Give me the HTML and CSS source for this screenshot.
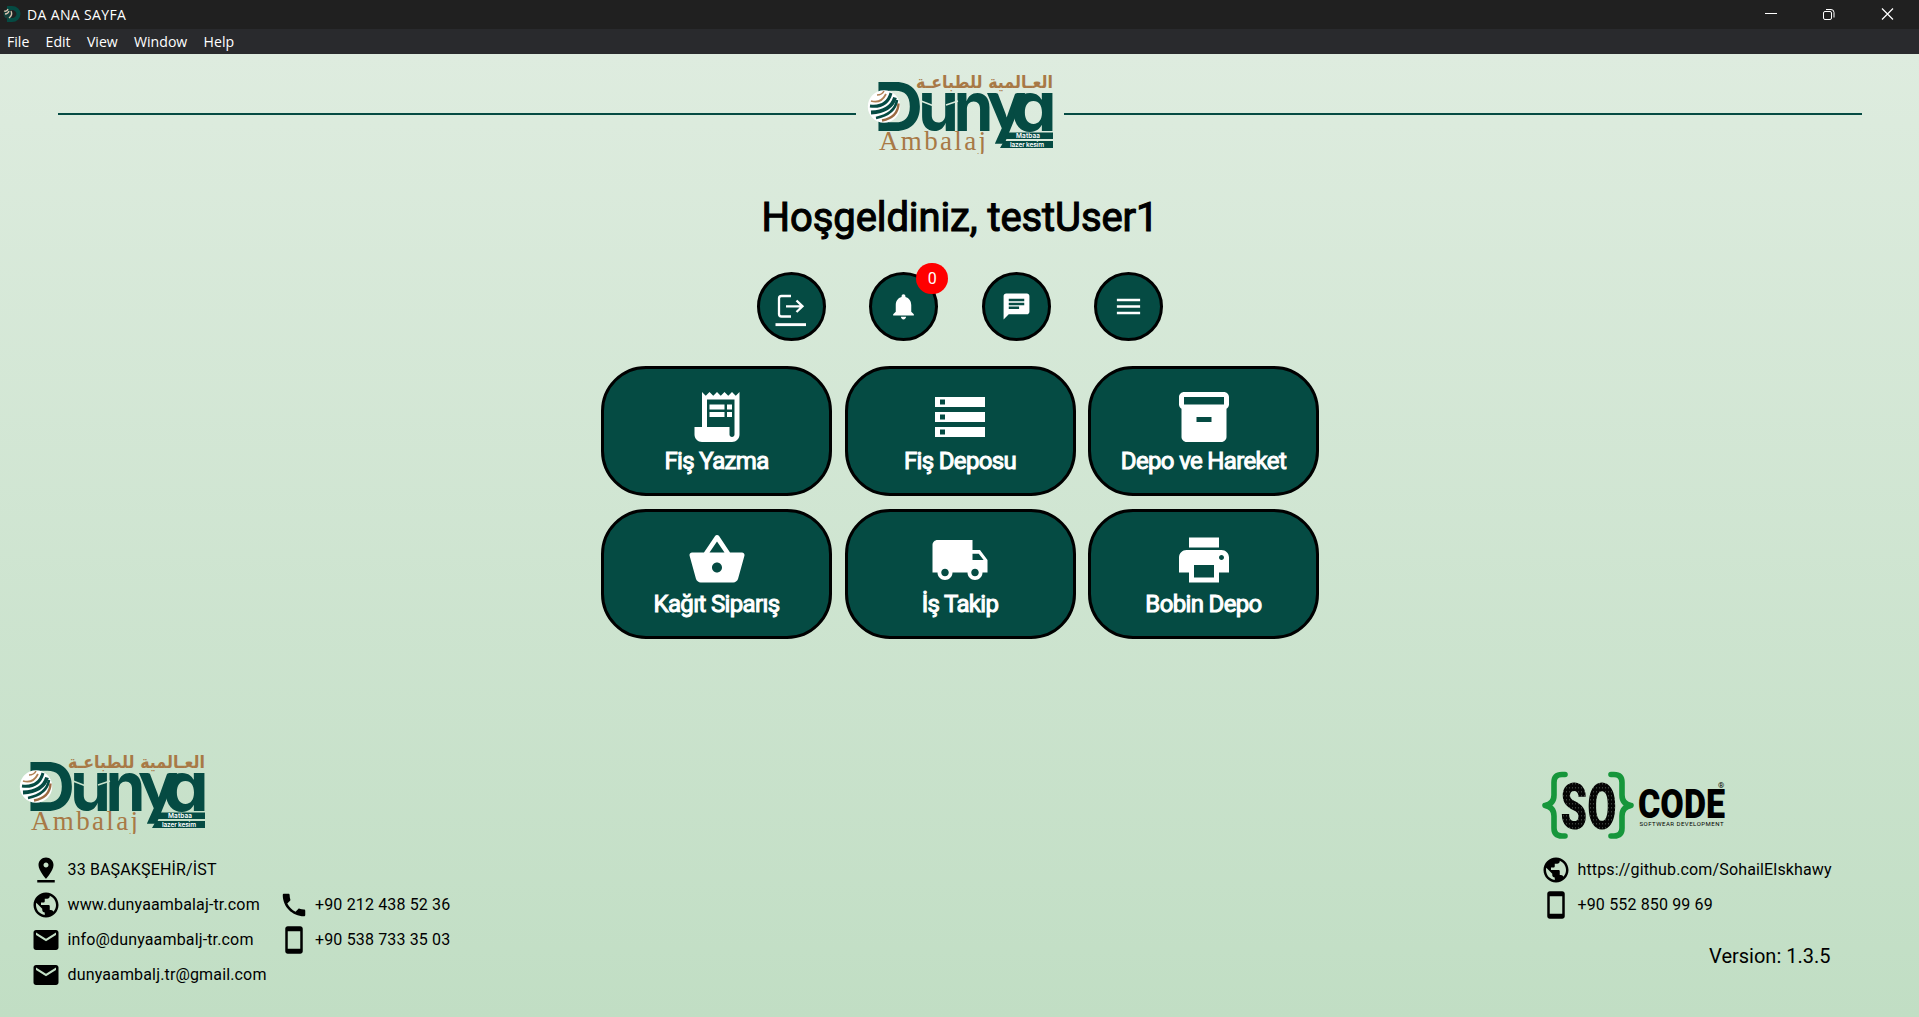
FILE: index.html
```html
<!DOCTYPE html>
<html lang="tr">
<head>
<meta charset="utf-8">
<title>DA ANA SAYFA</title>
<link rel="stylesheet" href="styles.css">
</head>
<body>
<svg class="sprite" aria-hidden="true">
  <symbol id="dunya" viewBox="0 0 190 80">
    <g class="brand-green">
      <text class="brand-word" font-size="67.4" x="9" y="56.500" textLength="49" lengthAdjust="spacingAndGlyphs">D</text>
      <text class="brand-word" font-size="69" x="53" y="56.500" textLength="41" lengthAdjust="spacingAndGlyphs">u</text>
      <text class="brand-word" font-size="69" x="88.500" y="56.500" textLength="40" lengthAdjust="spacingAndGlyphs">n</text>
      <text class="brand-y" font-size="75" x="122" y="57" textLength="38" lengthAdjust="spacingAndGlyphs">y</text>
      <text class="brand-word" font-size="69" x="146" y="56.500" textLength="46" lengthAdjust="spacingAndGlyphs">a</text>
      <path d="M143 58.500h45v6.500h-48.500zM139 67h49v7h-53z"/>
    </g>
    <path class="brand-slash" d="M56 27l13 5M81 31l12-4"/>
    <text class="brand-arabic" x="188" y="14" textLength="137" lengthAdjust="spacingAndGlyphs">العـالمية للطباعـة</text>
    <text class="brand-sub" x="14" y="75.500" textLength="107">Ambalaj</text>
    <text class="brand-tag" x="151" y="63.600" textLength="24">Matbaa</text>
    <text class="brand-tag" x="145" y="72.600" textLength="34">lazer kesim</text>
    <circle cx="19" cy="32.500" r="16.200" fill="#fff"/>
    <g fill="none">
      <path d="M6 27q10 3 15-7" stroke="#b08055" stroke-width="1.800"/>
      <path d="M12 21q5 0 7-4" stroke="#b08055" stroke-width="1.500"/>
      <path d="M5 32q17 2 21-13" stroke="#054b43" stroke-width="3"/>
      <path d="M6 38.500q20-1 24-15" stroke="#054b43" stroke-width="3.800"/>
      <path d="M11 44q19-4 21-18" stroke="#054b43" stroke-width="2.600"/>
      <path d="M17 46.500q16-3 16.500-17" stroke="#9b6a42" stroke-width="2.400"/>
    </g>
  </symbol>
  <symbol id="i-web" viewBox="0 0 24 24"><path d="M12 2C6.48 2 2 6.48 2 12s4.48 10 10 10 10-4.48 10-10S17.52 2 12 2zm-1 17.93c-3.95-.49-7-3.85-7-7.93 0-.62.08-1.21.21-1.79L9 15v1c0 1.1.9 2 2 2v1.93zm6.9-2.54c-.26-.81-1-1.39-1.9-1.39h-1v-3c0-.55-.45-1-1-1H8v-2h2c.55 0 1-.45 1-1V7h2c1.1 0 2-.9 2-2v-.41c2.93 1.19 5 4.06 5 7.41 0 2.08-.8 3.97-2.1 5.39z"/></symbol>
  <symbol id="i-mail" viewBox="0 0 24 24"><path d="M20 4H4c-1.1 0-1.99.9-1.99 2L2 18c0 1.1.9 2 2 2h16c1.1 0 2-.9 2-2V6c0-1.1-.9-2-2-2zm0 4l-8 5-8-5V6l8 5 8-5v2z"/></symbol>
  <symbol id="i-pin" viewBox="0 0 24 24"><path d="M18 8c0-3.31-2.69-6-6-6S6 4.69 6 8c0 4.5 6 11 6 11s6-6.5 6-11zm-8 0c0-1.1.9-2 2-2s2 .9 2 2-.89 2-2 2c-1.1 0-2-.9-2-2zM5 20v2h14v-2H5z"/></symbol>
  <symbol id="i-call" viewBox="0 0 24 24"><path d="M6.62 10.79c1.44 2.83 3.76 5.14 6.59 6.59l2.2-2.2c.27-.27.67-.36 1.02-.24 1.12.37 2.33.57 3.57.57.55 0 1 .45 1 1V20c0 .55-.45 1-1 1-9.39 0-17-7.61-17-17 0-.55.45-1 1-1h3.5c.55 0 1 .45 1 1 0 1.25.2 2.45.57 3.57.11.35.03.74-.25 1.02l-2.2 2.2z"/></symbol>
  <symbol id="i-mobile" viewBox="0 0 24 24"><path d="M17 1.01L7 1c-1.1 0-1.99.9-1.99 2v18c0 1.1.89 2 1.99 2h10c1.1 0 2-.9 2-2V3c0-1.1-.9-1.99-2-1.99zM17 19H7V5h10v14z"/></symbol>
</svg>

<div class="titlebar">
  <svg class="app-icon" viewBox="0 0 18 18"><path d="M4 0h5a8.500 8 0 0 1 0 16H4v-4h5a4.500 4 0 0 0 0-8H4z" fill="#054b43"/><circle cx="5" cy="8" r="4.500" fill="#163f3a"/><path d="M1 5q3 1 4-2M6 12q4-3 2-7M2 8q3 0 4-3" fill="none" stroke="#d9c2ae" stroke-width="1.300"/></svg>
  <span class="window-title">DA ANA SAYFA</span>
  <svg class="window-controls" viewBox="0 0 132 14" fill="none" stroke="#fff">
    <path d="M1 6.500h12"/>
    <rect x="59.500" y="4.500" width="8" height="8" rx="1.500"/><path d="M62 2.500h5a3 3 0 0 1 3 3v5"/>
    <path d="M118 1.500l11 11M129 1.500l-11 11" stroke-width="1.200"/>
  </svg>
</div>
<nav class="menubar"><span>File</span><span>Edit</span><span>View</span><span>Window</span><span>Help</span></nav>

<div class="page">
  <header class="brand-row"><i></i><svg class="dunya"><use href="#dunya"/></svg><i></i></header>
  <main>
    <h1>Hoşgeldiniz, testUser1</h1>
    <div class="actions">
      <button class="round"><svg viewBox="0 0 34 34"><path d="M17 6H7.500Q5 6 5 8.500V24Q5 26.500 7.500 26.500H17M12 16.300H28M22.500 10.500L28.500 16.300L22.500 22" fill="none" stroke="#fff" stroke-width="2.300"/><path d="M1.500 33.200h30.500v2.900H1.500z"/></svg></button>
      <button class="round"><svg viewBox="0 0 24 24"><path d="M12 22c1.100 0 2-.9 2-2h-4c0 1.100.89 2 2 2zm6-6v-5c0-3.070-1.640-5.640-4.500-6.320V4c0-.83-.67-1.500-1.500-1.500s-1.500.67-1.500 1.500v.68C7.630 5.360 6 7.920 6 11v5l-2 2v1h16v-1l-2-2z"/></svg><span class="badge">0</span></button>
      <button class="round"><svg viewBox="0 0 24 24"><path d="M20 2H4c-1.100 0-1.990.9-1.990 2L2 22l4-4h14c1.100 0 2-.9 2-2V4c0-1.100-.9-2-2-2zM6 9h12v2H6V9zm8 5H6v-2h8v2zm4-6H6V6h12v2z"/></svg></button>
      <button class="round"><svg viewBox="0 0 24 24"><path d="M3 18h18v-2H3v2zm0-5h18v-2H3v2zm0-7v2h18V6H3z"/></svg></button>
    </div>
    <div class="tiles">
      <button class="tile"><svg viewBox="0 0 24 24"><path d="M19.500 3.500L18 2l-1.500 1.500L15 2l-1.500 1.500L12 2l-1.500 1.500L9 2 7.500 3.500 6 2v14H3v3c0 1.660 1.340 3 3 3h12c1.660 0 3-1.340 3-3V2l-1.500 1.500zM19 19c0 .55-.45 1-1 1s-1-.45-1-1v-3H8V5h11v14z"/><path d="M9 7h6v2H9zM16 7h2v2h-2zM9 10h6v2H9zM16 10h2v2h-2z"/></svg><span>Fiş Yazma</span></button>
      <button class="tile"><svg viewBox="0 0 24 24"><path d="M2 20h20v-4H2v4zm2-3h2v2H4v-2zM2 4v4h20V4H2zm4 3H4V5h2v2zm-4 7h20v-4H2v4zm2-3h2v2H4v-2z"/></svg><span>Fiş Deposu</span></button>
      <button class="tile"><svg viewBox="0 0 24 24"><path d="M20 2H4c-1 0-2 .9-2 2v3.010c0 .72.43 1.340 1 1.690V20c0 1.100 1.100 2 2 2h14c.9 0 2-.9 2-2V8.700c.57-.35 1-.97 1-1.690V4c0-1.100-1-2-2-2zm-5 12H9v-2h6v2zm5-7H4V4h16v3z"/></svg><span>Depo ve Hareket</span></button>
      <button class="tile"><svg viewBox="0 0 24 24"><path d="M17.210 9l-4.380-6.560c-.19-.28-.51-.42-.83-.42-.32 0-.64.14-.83.43L6.790 9H2c-.55 0-1 .45-1 1 0 .09.01.18.04.27l2.540 9.270c.23.84 1 1.460 1.920 1.460h13c.92 0 1.690-.62 1.930-1.460l2.540-9.270L23 10c0-.55-.45-1-1-1h-4.790zM9 9l3-4.400L15 9H9zm3 8c-1.100 0-2-.9-2-2s.9-2 2-2 2 .9 2 2-.9 2-2 2z"/></svg><span>Kağıt Siparış</span></button>
      <button class="tile"><svg viewBox="0 0 24 24"><path d="M20 8h-3V4H3c-1.100 0-2 .9-2 2v11h2c0 1.660 1.340 3 3 3s3-1.340 3-3h6c0 1.660 1.340 3 3 3s3-1.340 3-3h2v-5l-3-4zM6 18.500c-.83 0-1.500-.67-1.500-1.500s.67-1.500 1.500-1.500 1.500.67 1.500 1.500-.67 1.500-1.500 1.500zm13.500-9l1.960 2.500H17V9.500h2.500zm-1.500 9c-.83 0-1.500-.67-1.500-1.500s.67-1.500 1.500-1.500 1.500.67 1.500 1.500-.67 1.500-1.500 1.500z"/></svg><span>İş Takip</span></button>
      <button class="tile"><svg viewBox="0 0 24 24"><path d="M19 8H5c-1.660 0-3 1.340-3 3v6h4v4h12v-4h4v-6c0-1.660-1.340-3-3-3zm-3 11H8v-5h8v5zm3-7c-.55 0-1-.45-1-1s.45-1 1-1 1 .45 1 1-.45 1-1 1zm-1-9H6v4h12V3z"/></svg><span>Bobin Depo</span></button>
    </div>
  </main>
  <footer>
    <section class="company">
      <svg class="dunya"><use href="#dunya"/></svg>
      <div class="columns">
        <ul>
          <li><svg><use href="#i-pin"/></svg><span>33 BAŞAKŞEHİR/İST</span></li>
          <li><svg><use href="#i-web"/></svg><span>www.dunyaambalaj-tr.com</span></li>
          <li><svg><use href="#i-mail"/></svg><span>info@dunyaambalj-tr.com</span></li>
          <li><svg><use href="#i-mail"/></svg><span>dunyaambalj.tr@gmail.com</span></li>
        </ul>
        <ul class="phones">
          <li><svg><use href="#i-call"/></svg><span>+90 212 438 52 36</span></li>
          <li><svg><use href="#i-mobile"/></svg><span>+90 538 733 35 03</span></li>
        </ul>
      </div>
    </section>
    <section class="developer">
      <svg class="socode" viewBox="0 0 190 76">
        <defs><pattern id="code-dots" width="3" height="4" patternUnits="userSpaceOnUse"><rect width="3" height="4" fill="#050505"/><path d="M1 1h1v1.500H1z" fill="#3b403c"/></pattern></defs>
        <g fill="none" stroke="#16963b" stroke-width="5.600" stroke-linecap="round" stroke-linejoin="round">
          <path d="M24 8.500h-3q-8 0-8 8V29q0 9-9 10.500 9 1.500 9 10.500v12q0 8 8 8h3"/>
          <path d="M70 8.500h3q8 0 8 8V29q0 9 9 10.500-9 1.500-9 10.500v12q0 8-8 8h-3"/>
        </g>
        <text class="so" x="19.500" y="63" textLength="56" lengthAdjust="spacingAndGlyphs">SO</text>
        <text class="code" x="97" y="52" textLength="87" lengthAdjust="spacingAndGlyphs">CODE</text>
        <text class="reg" x="177" y="22">®</text>
        <text class="dev" x="98.500" y="60" textLength="84">SOFTWEAR DEVELOPMENT</text>
      </svg>
      <ul>
        <li><svg><use href="#i-web"/></svg><span>https://github.com/SohailElskhawy</span></li>
        <li><svg><use href="#i-mobile"/></svg><span>+90 552 850 99 69</span></li>
      </ul>
      <p class="version">Version: 1.3.5</p>
    </section>
  </footer>
</div>
</body>
</html>
```
FILE: styles.css
```css
* { box-sizing: border-box; margin: 0; padding: 0; }
body {
  height: 100vh;
  display: flex;
  flex-direction: column;
  overflow: hidden;
  font-family: Roboto, sans-serif;
  color: #000;
}
ul { list-style: none; }
.sprite { position: absolute; width: 0; height: 0; }

.titlebar {
  height: 29px;
  flex: none;
  display: flex;
  align-items: center;
  padding: 0 23px 0 3px;
  background: #202020;
  color: #fff;
  font: 14px/20px "Open Sans", sans-serif;
}
.app-icon { width: 18px; height: 18px; }
.window-title { margin-left: 6px; letter-spacing: .35px; }
.window-controls { width: 132px; height: 14px; margin: -1px 0 0 auto; }
.menubar {
  height: 25px;
  flex: none;
  display: flex;
  align-items: center;
  gap: 16.300px;
  padding-left: 7px;
  background: #292a2d;
  color: #fff;
  font: 14.100px/20px "Open Sans", sans-serif;
}

.page {
  flex: 1;
  display: flex;
  flex-direction: column;
  background: linear-gradient(#deecdf, #c1dec4);
}
.brand-row {
  display: flex;
  align-items: center;
  gap: 9px;
  height: 80px;
  margin: 20px 57px 0 58px;
}
.brand-row i { flex: 1; height: 2px; background: #054b43; }
.dunya { display: block; width: 190px; height: 80px; color: #dbebdc; }
.company .dunya { color: #c8e2cb; }
.brand-green { fill: #054b43; }
.brand-slash { fill: none; stroke: currentColor; stroke-width: 1.500; }
.brand-word { font-family: Inter, sans-serif; font-weight: 700; font-feature-settings: "cv11"; }
.brand-y { font-family: Lato, sans-serif; font-weight: 900; }
.brand-arabic { font: bold 17.500px "DejaVu Sans", sans-serif; fill: #a87946; direction: rtl; }
.brand-sub { font: 27px "Liberation Serif", serif; fill: #a87946; }
.brand-tag { font: 600 6.500px Inter, sans-serif; fill: #fff; }

main { display: flex; flex-direction: column; align-items: center; }
h1 {
  margin: 39px 0 0 1px;
  font-size: 40px;
  line-height: 50px;
  font-weight: 400;
  letter-spacing: -.1px;
  -webkit-text-stroke: 1.100px #000;
}
.actions { display: flex; gap: 43.600px; margin: 29px 0 0 1px; }
.round {
  position: relative;
  display: flex;
  align-items: center;
  justify-content: center;
  width: 69px;
  height: 69px;
  border: 3px solid #000;
  border-radius: 50%;
  background: #054b43;
}
.round svg { width: 31px; height: 31px; fill: #fff; overflow: visible; }
.round:first-child svg { width: 34px; height: 34px; }
.badge {
  position: absolute;
  top: -12px;
  right: -13px;
  width: 32px;
  height: 31px;
  border-radius: 16px;
  background: red;
  color: #fff;
  font: 16px/31px Roboto, sans-serif;
  text-align: center;
}
.tiles { display: grid; grid-template-columns: repeat(3, 231px); gap: 13px 12.500px; margin: 25px 0 0 1px; }
.tile {
  height: 130px;
  display: flex;
  flex-direction: column;
  align-items: center;
  padding-top: 18px;
  border: 3px solid #000;
  border-radius: 45px;
  background: #054b43;
  color: #fff;
  font: 400 24px/28px Roboto, sans-serif;
  letter-spacing: -.65px;
  -webkit-text-stroke: 1px #fff;
}
.tile svg { width: 60px; height: 60px; fill: #fff; -webkit-text-stroke: 0; }

footer { display: flex; justify-content: space-between; margin-top: auto; height: 263px; }
.company { padding-left: 17px; }
.columns { display: flex; padding: 21px 0 0 14px; }
.columns ul:first-child { width: 247.500px; }
.phones { padding-top: 35px; }
li { display: flex; gap: 6.500px; height: 35px; font-size: 16px; line-height: 30px; letter-spacing: .15px; }
li svg { width: 30px; height: 30px; }
.developer { width: 378px; padding-top: 12px; }
.socode { display: block; width: 190px; height: 76px; }
.developer ul { padding-top: 13px; }
.version { padding: 16px 88.500px 0 0; font-size: 20px; line-height: 30px; text-align: right; }
.so { font: 900 64px Roboto, sans-serif; fill: url(#code-dots); }
.code { font: 900 41px Roboto, sans-serif; }
.reg { font: 8px Roboto, sans-serif; }
.dev { font: 6px Roboto, sans-serif; }
```
